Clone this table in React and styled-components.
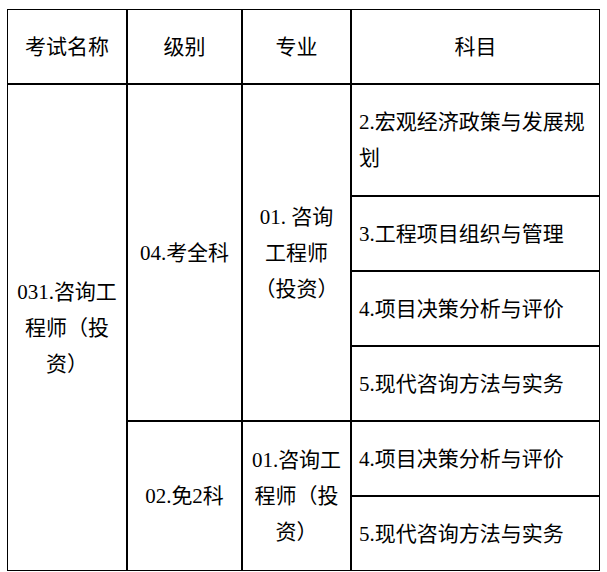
import React from "react";
import styled, { createGlobalStyle } from "styled-components";

const GlobalStyle = createGlobalStyle`
  html, body {
    margin: 0;
    padding: 0;
    background: #fff;
  }
  body {
    font-family: "Liberation Serif", "Noto Sans CJK SC", serif;
    color: #000;
  }
`;

const Page = styled.div`
  padding: 9px 0 0 7px;
`;

const Grid = styled.div`
  display: grid;
  grid-template-columns: 120px 115px 109px 247px;
  grid-template-rows: 75px 112px 75px 75px 75px 75px 73px;
  width: fit-content;
  border: 1px solid #000;
  font-size: 21px;
  line-height: 36px;
`;

const Cell = styled.div`
  box-sizing: border-box;
  grid-column: ${(p) => p.$col};
  grid-row: ${(p) => p.$row} / span ${(p) => p.$span || 1};
  border-right: ${(p) => (p.$lastCol ? "none" : "2px solid #000")};
  border-bottom: ${(p) => (p.$lastRow ? "none" : "2px solid #000")};
  display: flex;
  align-items: center;
  justify-content: ${(p) => (p.$left ? "flex-start" : "center")};
  text-align: ${(p) => (p.$left ? "left" : "center")};
  padding: 0 ${(p) => p.$pad || 8}px;
  line-break: strict;
`;

const headers = ["考试名称", "级别", "专业", "科目"];

const subjects = [
  "2.宏观经济政策与发展规划",
  "3.工程项目组织与管理",
  "4.项目决策分析与评价",
  "5.现代咨询方法与实务",
  "4.项目决策分析与评价",
  "5.现代咨询方法与实务",
];

const App = () => {
  return (
    <Page>
      <GlobalStyle />
      <Grid>
        {headers.map((h, i) => (
          <Cell key={`h${i}`} $col={i + 1} $row={1} $lastCol={i === 3}>
            {h}
          </Cell>
        ))}

        <Cell $col={1} $row={2} $span={6} $lastRow>
          031.咨询工程师（投资）
        </Cell>

        <Cell $col={2} $row={2} $span={4}>
          04.考全科
        </Cell>
        <Cell $col={2} $row={6} $span={2} $lastRow>
          02.免2科
        </Cell>

        <Cell $col={3} $row={2} $span={4}>
          01. 咨询工程师（投资）
        </Cell>
        <Cell $col={3} $row={6} $span={2} $lastRow>
          01.咨询工程师（投资）
        </Cell>

        {subjects.map((s, i) => (
          <Cell
            key={`s${i}`}
            $col={4}
            $row={i + 2}
            $lastCol
            $lastRow={i === subjects.length - 1}
            $left
            $pad={7}
          >
            {s}
          </Cell>
        ))}
      </Grid>
    </Page>
  );
};

export default App;
